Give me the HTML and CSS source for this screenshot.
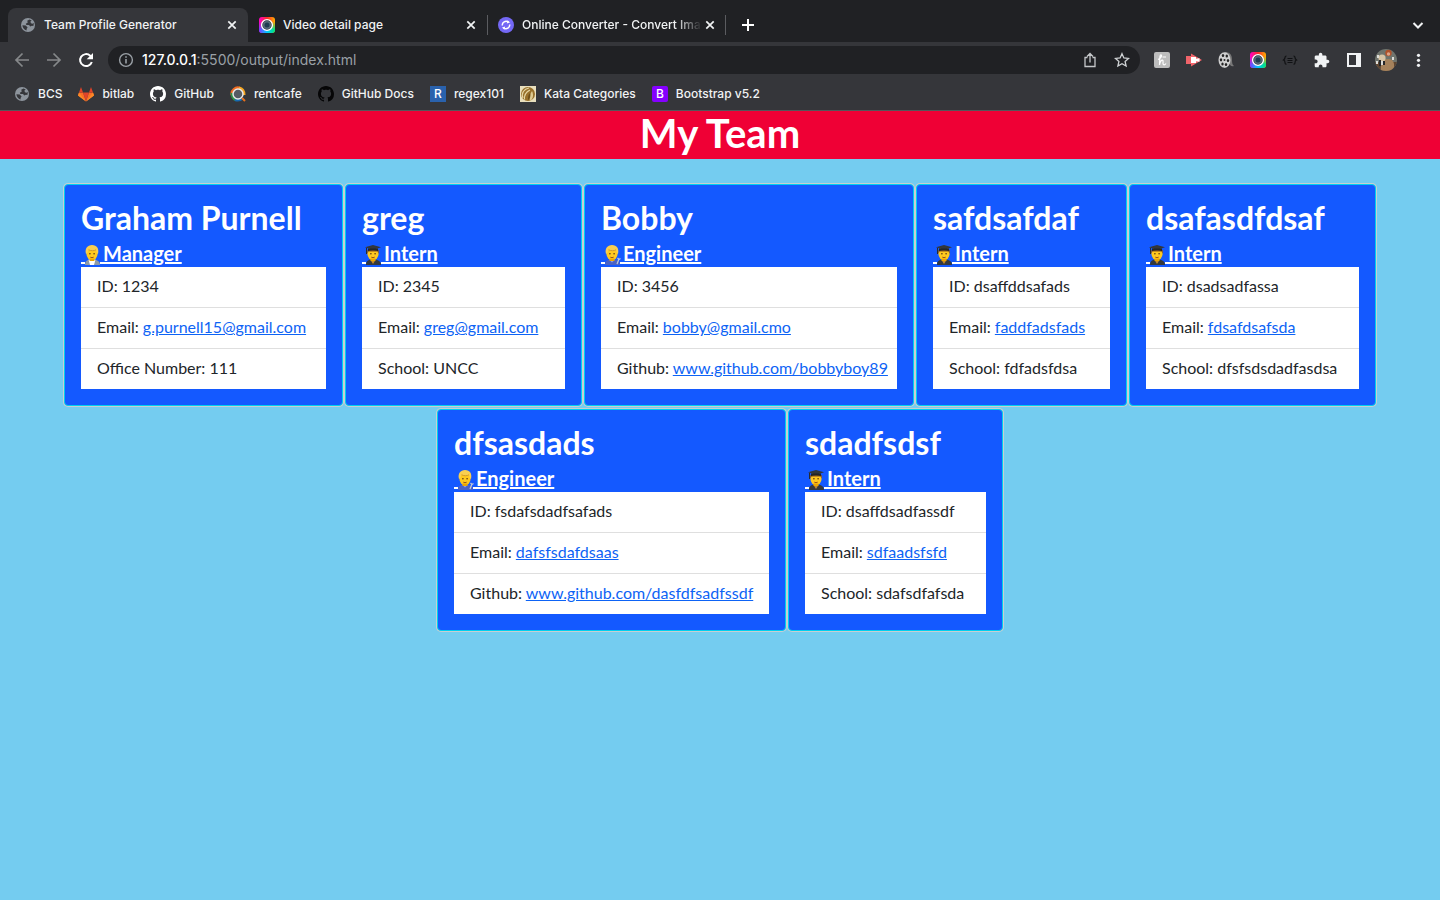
FILE: index.html
```html
<!DOCTYPE html>
<html lang="en">
<head>
<meta charset="utf-8">
<title>Team Profile Generator</title>
<link rel="stylesheet" href="styles.css">
</head>
<body>
<svg class="defs" aria-hidden="true">
  <defs>
    <linearGradient id="rainbow-a" x1="0" y1="0" x2="1" y2="0"><stop offset="0" stop-color="#ff00c8"/><stop offset=".5" stop-color="#ff2a2a"/><stop offset="1" stop-color="#ffb000"/></linearGradient>
    <linearGradient id="rainbow-b" x1="0" y1="0" x2="1" y2="0"><stop offset="0" stop-color="#7a3cff"/><stop offset=".5" stop-color="#00c8ff"/><stop offset="1" stop-color="#00e676"/></linearGradient>
    <linearGradient id="fade" x1="0" y1="0" x2="0" y2="1"><stop offset=".3" stop-color="#fff" stop-opacity="0"/><stop offset=".8" stop-color="#fff"/></linearGradient>
    <mask id="lower"><rect width="16" height="16" fill="url(#fade)"/></mask>
    <clipPath id="avatar-clip"><circle cx="11" cy="11" r="11"/></clipPath>
    <symbol id="globe" viewBox="0 0 16 16"><circle cx="8" cy="8" r="7" fill="#8d949c"/><path d="M9.500 2.400 7.200 3.800l.6 1.700-2 1.200.6 1.300H9l1.300 1.400 1.600-.6 1.500.3.500-3-1.300.7-1.700-.5-.5-1.800 1.300-.9zM2.400 8.300l3.400.2 1.800 2-.9 1.200-.2 1.900c-2.300-.6-4-2.800-4.100-5.300z" fill="#35363a"/></symbol>
    <symbol id="lens" viewBox="0 0 16 16"><rect width="16" height="16" rx="3" fill="url(#rainbow-a)"/><rect width="16" height="16" rx="3" fill="url(#rainbow-b)" mask="url(#lower)"/><circle cx="8" cy="8" r="5.400" fill="#2b3440" stroke="#fff" stroke-width="1.400"/><circle cx="8" cy="8" r="4" fill="#566b78"/><circle cx="8" cy="8" r="2.500" fill="#203b50"/></symbol>
    <symbol id="close" viewBox="0 0 16 16"><path d="m4.300 4.300 7.400 7.400m0-7.400-7.400 7.400" stroke="#f1f3f4" stroke-width="1.700"/></symbol>
    <symbol id="octocat" viewBox="0 0 16 16"><path fill="currentColor" d="M8 0C3.58 0 0 3.58 0 8c0 3.54 2.29 6.53 5.47 7.59.4.07.55-.17.55-.38 0-.19-.01-.82-.01-1.49-2.01.37-2.53-.49-2.69-.94-.09-.23-.48-.94-.82-1.13-.28-.15-.68-.52-.01-.53.63-.01 1.08.58 1.23.82.72 1.21 1.87.87 2.33.66.07-.52.28-.87.51-1.07-1.78-.2-3.64-.89-3.64-3.95 0-.87.31-1.59.82-2.15-.08-.2-.36-1.02.08-2.12 0 0 .67-.21 2.2.82.64-.18 1.32-.27 2-.27s1.36.09 2 .27c1.53-1.04 2.2-.82 2.2-.82.44 1.1.16 1.92.08 2.12.51.56.82 1.27.82 2.15 0 3.07-1.87 3.75-3.65 3.95.29.25.54.73.54 1.48 0 1.07-.01 1.93-.01 2.2 0 .21.15.46.55.38A8.01 8.01 0 0 0 16 8c0-4.42-3.58-8-8-8z"/></symbol>
    <symbol id="face" viewBox="0 0 18 20"><ellipse cx="9" cy="8.500" rx="5.600" ry="6.800" fill="#ffc91f"/><path d="M6.600 13.500h4.800V16H6.600z" fill="#eda600"/><circle cx="6.900" cy="8.800" r=".8" fill="#553118"/><circle cx="11.100" cy="8.800" r=".8" fill="#553118"/><path d="M7.300 12.200q1.700.9 3.400 0" stroke="#9c5518" fill="none"/></symbol>
    <symbol id="hair" viewBox="0 0 18 20"><path d="M3 9C1.500 3.800 4.500 0 9 0c5 0 7.300 3.800 6 9l-1.300-1-.5-2.800C10 6.500 7 5.800 5.500 5L4.300 8z" fill="#f9cf50"/><path d="M5.500 4.800C8 6 11 6 13 4.800" fill="none" stroke="#c98f1c" stroke-width=".8"/></symbol>
    <symbol id="base" viewBox="0 0 22 20"><path d="M0 17h4v2H0zM19 17h3v2h-3z" fill="#fff"/></symbol>
    <symbol id="manager" viewBox="0 0 22 20"><use href="#base"/><g transform="translate(2)"><path d="M2 20c0-4 2-5 5-5.500h4c3 .5 6 1.500 6 5.500z" fill="#8f9aa6"/><path d="m5.500 14.500 1.500 5.500h4l1.500-5.500z" fill="#fff"/><use href="#face" width="18" height="20"/><use href="#hair" width="18" height="20"/></g></symbol>
    <symbol id="engineer" viewBox="0 0 22 20"><use href="#base"/><g transform="translate(2)"><path d="M2 20c0-4 2-5 5-5.500h4c3 .5 6 1.500 6 5.500z" fill="#4a62c4"/><path d="m6 14.500 3 3 3-3z" fill="#8fa0ec"/><use href="#face" width="18" height="20"/><use href="#hair" width="18" height="20"/><path d="m14 19 2-5m-1.500-1 1.500 1.500 1.500-1" stroke="#c0c8d4" stroke-width="1.300" fill="none"/></g></symbol>
    <symbol id="intern" viewBox="0 0 22 20"><use href="#base"/><g transform="translate(2)"><path d="M2 20c0-4 2-5 5-5.500h4c3 .5 6 1.500 6 5.500z" fill="#34383d"/><path d="m6.500 15 2.500 4 2.500-4z" fill="#c78b28"/><use href="#face" width="18" height="20"/><path d="M3.300 9V5h11.400v4l-1.200-2.500h-9z" fill="#86511b"/><path d="M9 0 17 2.300 9 5 1 2.300z" fill="#33373b"/><path d="M4 3.500h10V6Q9 4.600 4 6z" fill="#222528"/><path d="M2.500 3v6" stroke="#262a2e"/></g></symbol>
  </defs>
</svg>
<div class="browser">
  <nav class="tabs" aria-label="Tabs">
    <div class="tab tab-active"><svg class="icon"><use href="#globe"/></svg><span class="tab-title">Team Profile Generator</span><button class="tab-close" aria-label="Close tab"><svg class="icon"><use href="#close"/></svg></button></div>
    <div class="tab"><svg class="icon"><use href="#lens"/></svg><span class="tab-title">Video detail page</span><button class="tab-close" aria-label="Close tab"><svg class="icon"><use href="#close"/></svg></button></div>
    <div class="tab tab-split"><svg class="icon" viewBox="0 0 16 16"><circle cx="8" cy="8" r="8" fill="#7468f5"/><path d="M4.300 8.500A3.800 3.800 0 0 1 10.300 5M11.700 7.500A3.800 3.800 0 0 1 5.700 11" fill="none" stroke="#fff" stroke-width="1.500"/><path d="m9.600 3.200 2.400 2.400-3.200.8zM6.400 12.800 4 10.400l3.200-.8z" fill="#fff"/></svg><span class="tab-title tab-fade">Online Converter - Convert Ima</span><button class="tab-close" aria-label="Close tab"><svg class="icon"><use href="#close"/></svg></button></div>
    <button class="new-tab" aria-label="New tab"><svg class="icon" viewBox="0 0 16 16"><path d="M8 2v12M2 8h12" stroke="#fff" stroke-width="2"/></svg></button>
    <button class="tab-search" aria-label="Search tabs"><svg class="icon" viewBox="0 0 16 16"><path d="m3.500 6 4.500 4.500L12.500 6" fill="none" stroke="#f1f3f4" stroke-width="2"/></svg></button>
  </nav>
  <div class="toolbar">
    <button class="tool" aria-label="Back"><svg class="icon" viewBox="0 0 16 16"><path d="M15 8H2m6.500-6.500L2 8l6.500 6.500" fill="none" stroke="#86888a" stroke-width="1.700"/></svg></button>
    <button class="tool" aria-label="Forward"><svg class="icon" viewBox="0 0 16 16"><path d="M1 8h13M7.500 1.500 14 8l-6.500 6.500" fill="none" stroke="#86888a" stroke-width="1.700"/></svg></button>
    <button class="tool" aria-label="Reload"><svg class="icon" viewBox="0 0 16 16"><path d="M13.800 10A6 6 0 1 1 12.200 3.700L13.500 5" fill="none" stroke="#fff" stroke-width="2"/><path d="M15 1v6.300H8.700z" fill="#fff"/></svg></button>
    <div class="address">
      <svg class="icon" viewBox="0 0 16 16"><circle cx="8" cy="8" r="6.400" fill="none" stroke="#9aa0a6" stroke-width="1.400"/><path d="M8 7v4.500M8 4.200v1.600" stroke="#9aa0a6" stroke-width="1.600"/></svg>
      <span class="url"><b>127.0.0.1</b>:5500/output/index.html</span>
      <button class="tool" aria-label="Share"><svg class="icon" viewBox="0 0 16 16"><path d="M5.500 5.500H3v9h10v-9h-2.500M8 10.500V1.800M5 4.500l3-3 3 3" fill="none" stroke="#c4c7c9" stroke-width="1.300"/></svg></button>
      <button class="tool" aria-label="Bookmark"><svg class="icon" viewBox="0 0 16 16"><path d="m8 1.700 1.900 4.200 4.600.5-3.400 3.100 1 4.500L8 11.700 3.900 14l1-4.500L1.500 6.400l4.600-.5z" fill="none" stroke="#d0d3d5" stroke-width="1.300"/></svg></button>
    </div>
    <div class="extensions">
      <button class="tool" aria-label="Honey"><svg class="icon" viewBox="0 0 16 16"><rect width="16" height="16" rx="2" fill="#bdbdbd"/><path d="M4 7.500C7 6.500 8.500 3 7 2.800S5.800 8 5.500 13C6 9.500 7.500 8 8.500 8.200S9 10 9 11.500s1.500 2 3 0M8.500 5h3.500" fill="none" stroke="#fff" stroke-width="1.200"/></svg></button>
      <button class="tool" aria-label="Recorder"><svg class="icon" viewBox="0 0 16 16"><path d="M0 4h5V1.500L16 8 5 14.500V12H0z" fill="#f0646a"/><path d="M5 5h5v1.800l3.500-.5v3.400l-3.500-.5V11H5z" fill="#fff"/></svg></button>
      <button class="tool" aria-label="Film"><svg class="icon" viewBox="0 0 16 16"><path d="M7 0c6 0 7 4 7 8s1 5 2 6c-3 1-4-1-5-3-1 3-3 5-5 5" fill="#777"/><ellipse cx="6.500" cy="8" rx="6" ry="7.800" fill="#cfcfcf"/><g fill="#242424"><ellipse cx="5" cy="3.500" rx="1.200" ry="1.600"/><ellipse cx="8.800" cy="4" rx="1.200" ry="1.600"/><ellipse cx="3" cy="7.800" rx="1.200" ry="1.600"/><ellipse cx="6.500" cy="8" rx="1" ry="1"/><ellipse cx="10" cy="8.500" rx="1.200" ry="1.600"/><ellipse cx="4.500" cy="12" rx="1.200" ry="1.600"/><ellipse cx="8" cy="12.500" rx="1.200" ry="1.600"/></g></svg></button>
      <button class="tool" aria-label="Lens"><svg class="icon"><use href="#lens"/></svg></button>
      <button class="tool" aria-label="JSON"><svg class="icon" viewBox="0 0 16 16"><path d="M4.500 4Q3 4 3 5.500T1.500 8Q3 8.500 3 10.500T4.500 12M11.500 4Q13 4 13 5.500T14.500 8Q13 8.500 13 10.500T11.500 12M5.500 6.500h5m-5 2h5m-5 2h5" fill="none" stroke="#101113" stroke-width="1.200"/></svg></button>
      <button class="tool" aria-label="Extensions"><svg class="icon" viewBox="1 0 23 23"><path d="M20.500 11H19V7c0-1.100-.9-2-2-2h-4V3.500C13 2.120 11.880 1 10.500 1S8 2.120 8 3.500V5H4c-1.100 0-1.990.9-1.990 2v3.800H3.500c1.490 0 2.700 1.210 2.700 2.700s-1.210 2.700-2.700 2.700H2V20c0 1.100.9 2 2 2h3.800v-1.500c0-1.490 1.210-2.700 2.700-2.700s2.700 1.210 2.700 2.700V22H17c1.100 0 2-.9 2-2v-4h1.500c1.380 0 2.500-1.120 2.500-2.500S21.880 11 20.500 11z" fill="#f1f3f4"/></svg></button>
      <button class="tool" aria-label="Side panel"><svg class="icon" viewBox="0 0 16 16"><path fill-rule="evenodd" d="M1 1h14v14H1zm2 2v10h7V3z" fill="#f1f3f4"/></svg></button>
      <button class="tool" aria-label="Profile"><svg class="avatar" viewBox="0 0 22 22"><g clip-path="url(#avatar-clip)"><path d="M0 0h22v22H0z" fill="#6f746d"/><path d="M0 13h22v9H0z" fill="#5d4531"/><path d="M8 11q10-3 11 4t-5 7H6q-1-6 2-11" fill="#a5825c"/><circle cx="13.500" cy="4" r="3.200" fill="#b0522a"/><circle cx="13.500" cy="5" r="1.700" fill="#dda488"/><circle cx="7" cy="9" r="3.600" fill="#d7c4a5"/><path d="M4 11h2v6H4m4-5h2v4H8" fill="#252628"/><path d="M6 12h2v4H6M2 6h2v3H2m15-1h2v3h-2M1 12h2v3H1" fill="#dcdcd8"/></g></svg></button>
      <button class="tool" aria-label="Menu"><svg class="icon" viewBox="0 0 16 16"><g fill="#f1f3f4"><circle cx="8.500" cy="3.300" r="1.600"/><circle cx="8.500" cy="8.300" r="1.600"/><circle cx="8.500" cy="13.300" r="1.600"/></g></svg></button>
    </div>
  </div>
  <nav class="bookmarks" aria-label="Bookmarks">
    <a href="#"><svg class="icon"><use href="#globe"/></svg>BCS</a>
    <a href="#"><svg class="icon" viewBox="0 0 16 16"><path d="m8 15.500 3-9H5z" fill="#e24329"/><path d="M8 15.500 5 6.500H1L0 9.500zM8 15.500l3-9h4l1 3z" fill="#fc6d26"/><path d="M1 6.500 3 1l2 5.500zM15 6.500 13 1l-2 5.500z" fill="#e24329"/><path d="M1 6.500 0 9.500l8 6zM15 6.500l1 3-8 6z" fill="#fc8a26"/></svg>bitlab</a>
    <a href="#"><svg class="icon icon-white"><use href="#octocat"/></svg>GitHub</a>
    <a href="#"><svg class="icon" viewBox="0 0 16 16"><g fill="none" stroke-width="3"><path d="M2 9A6 6 0 0 1 10 2.300" stroke="#ef6c22"/><path d="M9 2q5 1 5 7" stroke="#f5a623"/><path d="M2 7q0 5 4 7" stroke="#2f8f46"/><path d="M5 13.500q5 1.500 8-2" stroke="#1769b0"/></g><circle cx="8" cy="8" r="5" fill="#555b63" stroke="#e8e8e8" stroke-width="1.500"/><path d="m12 12 3 3" stroke="#e8701a" stroke-width="2"/></svg>rentcafe</a>
    <a href="#"><svg class="icon icon-black"><use href="#octocat"/></svg>GitHub Docs</a>
    <a href="#"><span class="badge badge-regex">R</span>regex101</a>
    <a href="#"><svg class="icon" viewBox="0 0 16 16"><path d="M0 0h16v16H0z" fill="#e9dfbd"/><circle cx="8" cy="8" r="7" fill="#98702a"/><path d="M3 12C1 7 4 3 9 2M4.500 13.500C4 9 6 6 10 4" fill="none" stroke="#e6d6a4" stroke-width="1.200"/><path d="M10 15c-1-4 0-7 2-10 2 4 1 8-2 10" fill="#decb92"/><path d="M8 14c0-3 0-5 2-7 1 3 0 6-2 7" fill="#6e4d18"/></svg>Kata Categories</a>
    <a href="#"><span class="badge badge-bootstrap">B</span>Bootstrap v5.2</a>
  </nav>
</div>
<header class="banner"><h1>My Team</h1></header>
<main class="team">
  <article class="card card-a"><h2>Graham Purnell</h2><h3><svg class="emoji"><use href="#manager"/></svg>Manager</h3><ul><li>ID: 1234</li><li>Email: <a href="#">g.purnell15@gmail.com</a></li><li>Office Number: 111</li></ul></article>
  <article class="card card-b"><h2>greg</h2><h3><svg class="emoji"><use href="#intern"/></svg>Intern</h3><ul><li>ID: 2345</li><li>Email: <a href="#">greg@gmail.com</a></li><li>School: UNCC</li></ul></article>
  <article class="card card-c"><h2>Bobby</h2><h3><svg class="emoji"><use href="#engineer"/></svg>Engineer</h3><ul><li>ID: 3456</li><li>Email: <a href="#">bobby@gmail.cmo</a></li><li>Github: <a href="#">www.github.com/bobbyboy89</a></li></ul></article>
  <article class="card card-d"><h2>safdsafdaf</h2><h3><svg class="emoji"><use href="#intern"/></svg>Intern</h3><ul><li>ID: dsaffddsafads</li><li>Email: <a href="#">faddfadsfads</a></li><li>School: fdfadsfdsa</li></ul></article>
  <article class="card card-e"><h2>dsafasdfdsaf</h2><h3><svg class="emoji"><use href="#intern"/></svg>Intern</h3><ul><li>ID: dsadsadfassa</li><li>Email: <a href="#">fdsafdsafsda</a></li><li>School: dfsfsdsdadfasdsa</li></ul></article>
  <article class="card card-f"><h2>dfsasdads</h2><h3><svg class="emoji"><use href="#engineer"/></svg>Engineer</h3><ul><li>ID: fsdafsdadfsafads</li><li>Email: <a href="#">dafsfsdafdsaas</a></li><li>Github: <a href="#">www.github.com/dasfdfsadfssdf</a></li></ul></article>
  <article class="card card-g"><h2>sdadfsdsf</h2><h3><svg class="emoji"><use href="#intern"/></svg>Intern</h3><ul><li>ID: dsaffdsadfassdf</li><li>Email: <a href="#">sdfaadsfsfd</a></li><li>School: sdafsdfafsda</li></ul></article>
</main>
</body>
</html>
```

FILE: styles.css
```css
* { box-sizing: border-box; }
body { margin: 0; min-height: 100vh; background: #74ccf0; color: #212529; font: 16px/22px Lato, sans-serif; }
button { border: 0; padding: 0; background: none; display: flex; align-items: center; justify-content: center; }
.defs { position: absolute; width: 0; height: 0; }
.icon { width: 16px; height: 16px; flex: none; display: block; }
.icon-white { color: #fff; }
.icon-black { color: #060607; }

.browser { background: #35363a; border-bottom: 1px solid #55565a; color: #f1f3f4; font: 500 12px/16px Inter, sans-serif; }
.tabs { display: flex; height: 42px; padding: 8px 14px 0 8px; background: #202124; }
.tab { display: flex; align-items: center; width: 239px; padding: 0 8px 0 11px; gap: 8px; }
.tab-active { width: 240px; padding-left: 12px; background: #35363a; border-radius: 8px 8px 0 0; }
.tab-split { background: linear-gradient(#5b5c60, #5b5c60) 0 50% / 1px 20px no-repeat, linear-gradient(#5b5c60, #5b5c60) 100% 50% / 1px 20px no-repeat; }
.tab-title { flex: 1; min-width: 0; white-space: nowrap; }
.tab-fade { margin-right: -8px; -webkit-mask-image: linear-gradient(90deg, #000 85%, transparent); mask-image: linear-gradient(90deg, #000 85%, transparent); }
.new-tab { width: 44px; }
.tab-search { margin-left: auto; width: 16px; }

.toolbar { display: flex; align-items: center; height: 36px; padding: 0 14px; gap: 16px; }
.address { display: flex; flex: 1; align-items: center; height: 28px; padding: 0 10px; gap: 8px; border-radius: 14px; background: #202124; margin-left: -2px; }
.address .tool + .tool { margin-left: 8px; }
.url { flex: 1; color: #9aa0a6; font-size: 14px; font-weight: 400; }
.url b { color: #fff; font-weight: 500; }
.extensions { display: flex; align-items: center; gap: 16px; margin-left: -2px; }
.avatar { width: 22px; height: 22px; margin: 0 -3px; }

.bookmarks { display: flex; align-items: center; height: 32px; padding: 0 14px; gap: 16px; }
.bookmarks a { display: flex; align-items: center; gap: 8px; color: inherit; text-decoration: none; white-space: nowrap; }
.badge { width: 16px; height: 16px; text-align: center; color: #fff; }
.badge-regex { background: #2a62ad; }
.badge-bootstrap { background: #8500ff; border-radius: 2px; }

.banner { padding-bottom: 4px; background: #ef0035; color: #fff; text-align: center; }
h1, h2, h3 { margin: 0; font-weight: 700; }
h1 { font-size: 40px; line-height: 44px; }

.team { display: flex; flex-wrap: wrap; justify-content: center; gap: 3px 2px; padding: 25px 48px; }
.card { padding: 16px; color: #fff; background: #1459ff; border: 1px solid #00cff0; border-radius: 4px; box-shadow: 0 0 0 1px #c8ced0; }
.card-a { width: 279px; }
.card-b { width: 237px; }
.card-c { width: 330px; }
.card-d { width: 211px; }
.card-e { width: 247px; }
.card-f { width: 349px; }
.card-g { width: 215px; }
h2 { font-size: 32px; line-height: 34px; margin-bottom: 6px; white-space: nowrap; }
h3 { height: 26px; font-size: 20px; line-height: 24px; text-decoration: underline; }
.emoji { width: 22px; height: 20px; vertical-align: -4px; }
ul { margin: 0; padding: 0; list-style: none; background: #fff; color: #212529; }
li { padding: 8px 16px 10px; white-space: nowrap; }
li + li { border-top: 1px solid #dfdfdf; }
li a { color: #0d63f5; }
```
